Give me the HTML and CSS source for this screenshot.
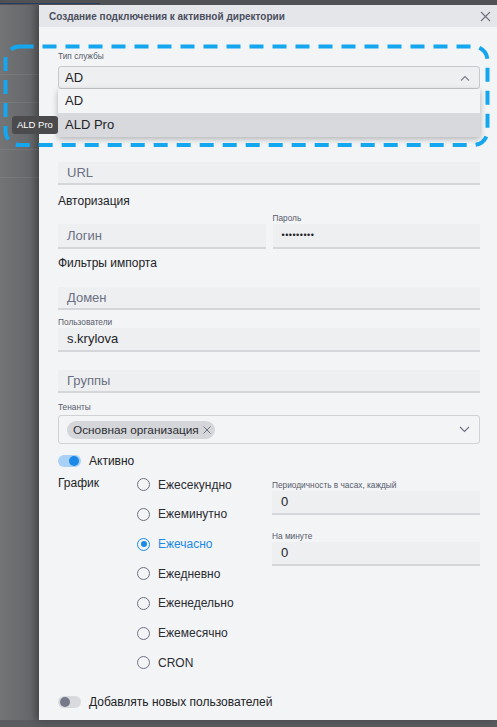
FILE: index.html
```html
<!DOCTYPE html>
<html lang="ru">
  <head>
    <meta charset="UTF-8" />
    <meta name="viewport" content="width=device-width, initial-scale=1.0" />
    <title>Создание подключения к активной директории</title>
    <link rel="stylesheet" href="styles.css">
  </head>
  <body>
    <div class="top-strip"><div class="top-strip-accent"></div></div>

    <div class="layout">
      <div class="backdrop">
        <div class="backdrop-row r1"></div>
        <div class="backdrop-row r2"></div>
        <div class="backdrop-row r3"></div>
        <div class="backdrop-row r4"></div>
      </div>

      <div class="drawer">
        <div class="drawer-header">
          <span class="drawer-title">Создание подключения к активной директории</span>
          <svg class="close-icon" width="11" height="11" viewBox="0 0 11 11">
            <path d="M1 1 L10 10 M10 1 L1 10" stroke="#6e7280" stroke-width="1.1" fill="none" />
          </svg>
        </div>

        <form class="drawer-body">
          <div class="small-label">Тип службы</div>
          <div class="select-wrap">
            <div class="select open">
              <span>AD</span>
              <svg width="10" height="6" viewBox="0 0 10 6">
                <path d="M1 5.5 L5 1.5 L9 5.5" stroke="#7a7e8a" stroke-width="1.1" fill="none" />
              </svg>
            </div>
            <ul class="select-menu">
              <li>AD</li>
              <li class="hovered">ALD Pro</li>
            </ul>
          </div>

          <div class="input url-field placeholder">URL</div>

          <div class="section-title auth-title">Авторизация</div>
          <div class="two-cols auth-row">
            <div class="input tall placeholder">Логин</div>
            <div>
              <div class="small-label">Пароль</div>
              <div class="input tall dots">•••••••••</div>
            </div>
          </div>

          <div class="section-title filters-title">Фильтры импорта</div>
          <div class="input domain-field placeholder">Домен</div>

          <div class="small-label users-label">Пользователи</div>
          <div class="input users-field">s.krylova</div>

          <div class="input groups-field placeholder">Группы</div>

          <div class="small-label tenants-label">Тенанты</div>
          <div class="tag-select">
            <span class="chip">Основная организация
              <svg width="8" height="8" viewBox="0 0 8 8">
                <path d="M0.5 0.5 L7.5 7.5 M7.5 0.5 L0.5 7.5" stroke="#6e7280" stroke-width="1" fill="none" />
              </svg>
            </span>
            <svg width="11" height="7" viewBox="0 0 11 7">
              <path d="M1 1 L5.5 5.5 L10 1" stroke="#6e7280" stroke-width="1.1" fill="none" />
            </svg>
          </div>

          <label class="switch-row active-row">
            <span class="switch on"><span class="knob"></span></span>
            <span>Активно</span>
          </label>

          <div class="schedule">
            <div class="schedule-title">График</div>
            <div class="radios">
              <div class="radio"><span class="circle"></span>Ежесекундно</div>
              <div class="radio"><span class="circle"></span>Ежеминутно</div>
              <div class="radio checked"><span class="circle"></span>Ежечасно</div>
              <div class="radio"><span class="circle"></span>Ежедневно</div>
              <div class="radio"><span class="circle"></span>Еженедельно</div>
              <div class="radio"><span class="circle"></span>Ежемесячно</div>
              <div class="radio"><span class="circle"></span>CRON</div>
            </div>
            <div class="schedule-params">
              <div class="small-label">Периодичность в часах, каждый</div>
              <div class="input">0</div>
              <div class="small-label minute-label">На минуте</div>
              <div class="input">0</div>
            </div>
          </div>

          <label class="switch-row new-users-row">
            <span class="switch"><span class="knob"></span></span>
            <span>Добавлять новых пользователей</span>
          </label>
        </form>
      </div>
    </div>

    <div class="tooltip">ALD Pro</div>

    <svg class="focus-ring" width="490" height="106" viewBox="0 0 490 106">
      <rect x="2.5" y="2.5" width="482" height="98.5" rx="14" ry="14"
        fill="none" stroke="#14a6ee" stroke-width="4" stroke-dasharray="14 9" />
    </svg>
  </body>
</html>
```

FILE: styles.css
```css
body {
  font-family: "Liberation Sans", Arial, sans-serif;
  margin: 0;
  padding: 0;
  width: 497px;
  height: 727px;
  overflow: hidden;
  background-color: #5b5c5f;
  color: #222326;
}
.top-strip {
  height: 5px;
  background-color: #505154;
  position: relative;
}
.top-strip-accent {
  width: 100px;
  height: 1px;
  background-color: #2b3c5e;
  position: absolute;
  bottom: 1px;
  left: 0;
}
.layout {
  display: flex;
  height: 715px;
}
.backdrop {
  width: 39px;
  background: linear-gradient(to right, #737476, #66676a 80%, #5a5b5e);
}
.backdrop-row {
  border-bottom: 1px solid rgba(255, 255, 255, 0.07);
}
.r1 { height: 69px; }
.r2 { height: 27px; }
.r3 { height: 46px; }
.r4 { height: 27px; }

.drawer {
  width: 458px;
  background-color: #f3f4f6;
  box-shadow: -3px 0 8px rgba(0, 0, 0, 0.25);
}
.drawer-header {
  height: 22px;
  background-color: #e5e6e9;
  display: flex;
  align-items: center;
  justify-content: space-between;
  padding: 0 6px 0 10px;
}
.drawer-title {
  font-size: 10px;
  font-weight: bold;
  color: #4a4e5e;
}
.drawer-body {
  padding: 23px 17px 0 19px;
  display: flex;
  flex-direction: column;
}
.small-label {
  font-size: 8.3px;
  line-height: 12px;
  color: #565b6b;
}
.select-wrap {
  position: relative;
  margin-top: 4px;
}
.select {
  height: 21px;
  border: 1px solid #c6c8cd;
  border-radius: 3px;
  background-color: #eeeff1;
  display: flex;
  align-items: center;
  justify-content: space-between;
  padding: 0 9px 0 6px;
  font-size: 13px;
}
.select-menu {
  position: absolute;
  top: 23px;
  left: 0;
  right: 0;
  margin: 0;
  padding: 0;
  list-style: none;
  background-color: #f3f4f6;
  box-shadow: 0 2px 6px rgba(0, 0, 0, 0.28);
  z-index: 2;
}
.select-menu li {
  height: 24px;
  line-height: 24px;
  padding-left: 7px;
  font-size: 13px;
}
.select-menu li.hovered {
  background-color: #d8d9dc;
}
.input {
  height: 21px;
  line-height: 21px;
  background-color: #eeeff1;
  border-bottom: 2px solid #d5d6da;
  padding-left: 9px;
  font-size: 13px;
  color: #222326;
}
.input.placeholder {
  color: #6b7082;
}
.input.tall {
  height: 23px;
  line-height: 23px;
}
.input.dots {
  font-size: 9px;
  letter-spacing: 0.5px;
}
.url-field { margin-top: 73px; }
.section-title {
  font-size: 12px;
  line-height: 16px;
}
.auth-title { margin-top: 8px; }
.two-cols {
  display: grid;
  grid-template-columns: 1fr 1fr;
  column-gap: 7px;
  align-items: end;
}
.auth-row { margin-top: 3px; }
.filters-title { margin-top: 6px; }
.domain-field { margin-top: 16px; }
.users-label { margin-top: 6px; }
.users-field {
  height: 22px;
  line-height: 22px;
}
.groups-field { margin-top: 18px; }
.tenants-label { margin-top: 8px; }
.tag-select {
  margin-top: 2px;
  height: 27px;
  border: 1px solid #cfd1d5;
  border-radius: 3px;
  display: flex;
  align-items: center;
  justify-content: space-between;
  padding: 0 9px 0 8px;
}
.chip {
  height: 18px;
  display: inline-flex;
  align-items: center;
  gap: 4px;
  padding: 0 4px 0 6px;
  border-radius: 9px;
  background-color: #d5d6da;
  font-size: 11.8px;
  color: #2c2e33;
}
.switch-row {
  display: flex;
  align-items: center;
  gap: 8px;
  font-size: 12px;
  line-height: 16px;
}
.active-row { margin-top: 9px; }
.new-users-row { margin-top: 16px; }
.switch {
  width: 23px;
  height: 12px;
  border-radius: 6px;
  background-color: #d9dadd;
  position: relative;
}
.switch .knob {
  position: absolute;
  top: 1px;
  left: 2px;
  width: 10px;
  height: 10px;
  border-radius: 50%;
  background-color: #767a88;
}
.switch.on {
  background-color: #a9d0f5;
}
.switch.on .knob {
  left: 11px;
  background-color: #1a8ae6;
}
.schedule {
  margin-top: 1px;
  display: grid;
  grid-template-columns: 79px 135px 1fr;
}
.schedule-title {
  padding-top: 5px;
  font-size: 12px;
  line-height: 16px;
}
.radio {
  height: 29.66px;
  display: flex;
  align-items: center;
  gap: 8px;
  font-size: 12px;
  color: #2a2c31;
}
.radio .circle {
  width: 11px;
  height: 11px;
  border: 1.5px solid #6e7281;
  border-radius: 50%;
  position: relative;
}
.radio.checked {
  color: #1a8ae6;
}
.radio.checked .circle {
  border-color: #1a8ae6;
}
.radio.checked .circle::after {
  content: "";
  position: absolute;
  top: 2.5px;
  left: 2.5px;
  width: 6px;
  height: 6px;
  border-radius: 50%;
  background-color: #1a8ae6;
}
.schedule-params {
  padding-top: 9px;
}
.schedule-params .input {
  height: 22px;
  line-height: 22px;
}
.minute-label { margin-top: 15px; }

.tooltip {
  position: absolute;
  left: 12px;
  top: 116px;
  height: 18px;
  line-height: 18px;
  padding: 0 5px;
  border-radius: 3px;
  background-color: #4b4b4e;
  color: #ffffff;
  font-size: 9.5px;
  z-index: 3;
}
.focus-ring {
  position: absolute;
  left: 3px;
  top: 44px;
  z-index: 4;
}
```
